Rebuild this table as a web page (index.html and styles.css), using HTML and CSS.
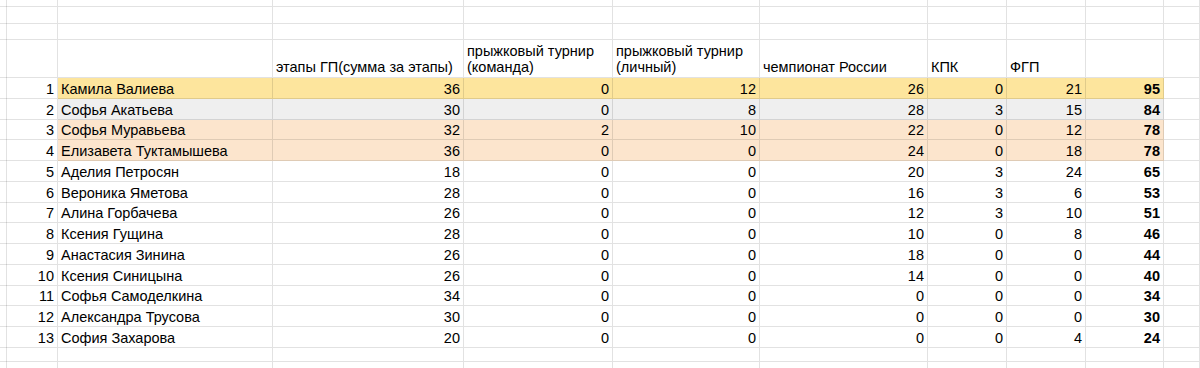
FILE: index.html
```html
<!DOCTYPE html>
<html lang="ru">
<head>
<meta charset="utf-8">
<title>Таблица</title>
<link rel="stylesheet" href="styles.css">
</head>
<body>
<div class="sheet">
  <div class="row r-top"><div class="c"></div><div class="c"></div><div class="c"></div><div class="c"></div><div class="c"></div><div class="c"></div><div class="c"></div><div class="c"></div><div class="c"></div><div class="c"></div><div class="c"></div></div>
  <div class="row r-a"><div class="c"></div><div class="c"></div><div class="c"></div><div class="c"></div><div class="c"></div><div class="c"></div><div class="c"></div><div class="c"></div><div class="c"></div><div class="c"></div><div class="c"></div></div>
  <div class="row r-b"><div class="c"></div><div class="c"></div><div class="c"></div><div class="c"></div><div class="c"></div><div class="c"></div><div class="c"></div><div class="c"></div><div class="c"></div><div class="c"></div><div class="c"></div></div>
  <div class="row r-head">
    <div class="c"></div><div class="c"></div><div class="c"></div>
    <div class="c t">этапы ГП(сумма за этапы)</div>
    <div class="c t">прыжковый турнир (команда)</div>
    <div class="c t">прыжковый турнир (личный)</div>
    <div class="c t">чемпионат России</div>
    <div class="c t">КПК</div>
    <div class="c t">ФГП</div>
    <div class="c"></div><div class="c"></div>
  </div>

  <div class="row r-d yellow"><div class="c"></div><div class="c n">1</div><div class="c t f">Камила Валиева</div><div class="c n f">36</div><div class="c n f">0</div><div class="c n f">12</div><div class="c n f">26</div><div class="c n f">0</div><div class="c n f">21</div><div class="c n f b">95</div><div class="c"></div></div>
  <div class="row r-d gray"><div class="c"></div><div class="c n">2</div><div class="c t f">Софья Акатьева</div><div class="c n f">30</div><div class="c n f">0</div><div class="c n f">8</div><div class="c n f">28</div><div class="c n f">3</div><div class="c n f">15</div><div class="c n f b">84</div><div class="c"></div></div>
  <div class="row r-d orange"><div class="c"></div><div class="c n">3</div><div class="c t f">Софья Муравьева</div><div class="c n f">32</div><div class="c n f">2</div><div class="c n f">10</div><div class="c n f">22</div><div class="c n f">0</div><div class="c n f">12</div><div class="c n f b">78</div><div class="c"></div></div>
  <div class="row r-d orange"><div class="c"></div><div class="c n">4</div><div class="c t f">Елизавета Туктамышева</div><div class="c n f">36</div><div class="c n f">0</div><div class="c n f">0</div><div class="c n f">24</div><div class="c n f">0</div><div class="c n f">18</div><div class="c n f b">78</div><div class="c"></div></div>
  <div class="row r-d"><div class="c"></div><div class="c n">5</div><div class="c t">Аделия Петросян</div><div class="c n">18</div><div class="c n">0</div><div class="c n">0</div><div class="c n">20</div><div class="c n">3</div><div class="c n">24</div><div class="c n b">65</div><div class="c"></div></div>
  <div class="row r-d"><div class="c"></div><div class="c n">6</div><div class="c t">Вероника Яметова</div><div class="c n">28</div><div class="c n">0</div><div class="c n">0</div><div class="c n">16</div><div class="c n">3</div><div class="c n">6</div><div class="c n b">53</div><div class="c"></div></div>
  <div class="row r-d"><div class="c"></div><div class="c n">7</div><div class="c t">Алина Горбачева</div><div class="c n">26</div><div class="c n">0</div><div class="c n">0</div><div class="c n">12</div><div class="c n">3</div><div class="c n">10</div><div class="c n b">51</div><div class="c"></div></div>
  <div class="row r-d"><div class="c"></div><div class="c n">8</div><div class="c t">Ксения Гущина</div><div class="c n">28</div><div class="c n">0</div><div class="c n">0</div><div class="c n">10</div><div class="c n">0</div><div class="c n">8</div><div class="c n b">46</div><div class="c"></div></div>
  <div class="row r-d"><div class="c"></div><div class="c n">9</div><div class="c t">Анастасия Зинина</div><div class="c n">26</div><div class="c n">0</div><div class="c n">0</div><div class="c n">18</div><div class="c n">0</div><div class="c n">0</div><div class="c n b">44</div><div class="c"></div></div>
  <div class="row r-d"><div class="c"></div><div class="c n">10</div><div class="c t">Ксения Синицына</div><div class="c n">26</div><div class="c n">0</div><div class="c n">0</div><div class="c n">14</div><div class="c n">0</div><div class="c n">0</div><div class="c n b">40</div><div class="c"></div></div>
  <div class="row r-d"><div class="c"></div><div class="c n">11</div><div class="c t">Софья Самоделкина</div><div class="c n">34</div><div class="c n">0</div><div class="c n">0</div><div class="c n">0</div><div class="c n">0</div><div class="c n">0</div><div class="c n b">34</div><div class="c"></div></div>
  <div class="row r-d"><div class="c"></div><div class="c n">12</div><div class="c t">Александра Трусова</div><div class="c n">30</div><div class="c n">0</div><div class="c n">0</div><div class="c n">0</div><div class="c n">0</div><div class="c n">0</div><div class="c n b">30</div><div class="c"></div></div>
  <div class="row r-d"><div class="c"></div><div class="c n">13</div><div class="c t">София Захарова</div><div class="c n">20</div><div class="c n">0</div><div class="c n">0</div><div class="c n">0</div><div class="c n">0</div><div class="c n">4</div><div class="c n b">24</div><div class="c"></div></div>

  <div class="row r-e"><div class="c"></div><div class="c"></div><div class="c"></div><div class="c"></div><div class="c"></div><div class="c"></div><div class="c"></div><div class="c"></div><div class="c"></div><div class="c"></div><div class="c"></div></div>
  <div class="row r-f"><div class="c"></div><div class="c"></div><div class="c"></div><div class="c"></div><div class="c"></div><div class="c"></div><div class="c"></div><div class="c"></div><div class="c"></div><div class="c"></div><div class="c"></div></div>
</div>
</body>
</html>
```

FILE: styles.css
```css
* {
  box-sizing: border-box;
}

html, body {
  margin: 0;
  padding: 0;
  background: #ffffff;
}

body {
  font-family: "Liberation Sans", Arial, sans-serif;
  font-size: 14.5px;
  color: #000000;
  overflow: hidden;
}

.sheet {
  width: 1200px;
  height: 368px;
  overflow: hidden;
}

.row {
  display: grid;
  grid-template-columns: 6px 52px 215px 191px 149px 147px 168px 79px 79px 78px 1fr;
}

.c {
  border-right: 1px solid rgba(0, 0, 0, 0.115);
  border-bottom: 1px solid rgba(0, 0, 0, 0.115);
  display: flex;
  align-items: flex-end;
  padding: 0 3px 1px 3px;
  line-height: 16px;
  white-space: nowrap;
  overflow: hidden;
}

.r-top { height: 7px; }
.r-a { height: 17px; }
.r-b { height: 16px; }
.r-head { height: 38px; }
.r-head .c { padding-bottom: 2px; }
.r-head .t { white-space: normal; }
.r-d { height: 20.77px; }
.r-e { height: 14.5px; }
.r-f { height: 20px; }

.n {
  justify-content: flex-end;
}

.t {
  justify-content: flex-start;
}

.b {
  font-weight: bold;
}

.yellow .f { background: #fde59d; }
.gray .f { background: #efefef; }
.orange .f { background: #fce5cd; }
```
